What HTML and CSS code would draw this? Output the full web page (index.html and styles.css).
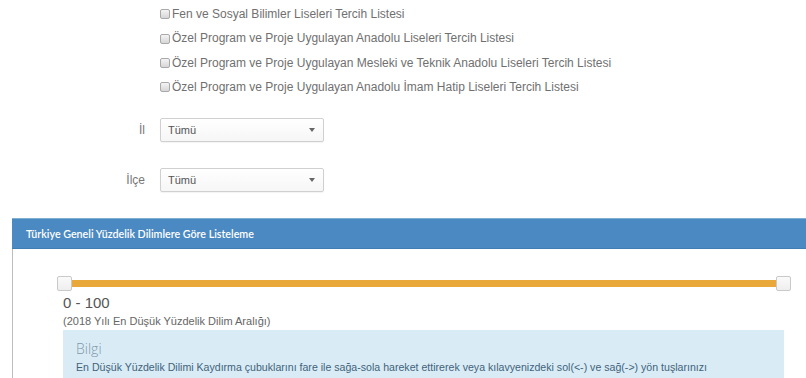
FILE: index.html
```html
<!DOCTYPE html>
<html lang="tr">
  <head>
    <meta charset="UTF-8" />
    <meta name="viewport" content="width=device-width, initial-scale=1.0" />
    <title>Tercih Listesi</title>
    <link rel="stylesheet" href="styles.css">
  </head>
  <body>
    <!-- liste seçimi -->
    <div class="filter-form">
      <ul class="check-list">
        <li><label><span class="checkbox"></span>Fen ve Sosyal Bilimler Liseleri Tercih Listesi</label></li>
        <li><label><span class="checkbox"></span>Özel Program ve Proje Uygulayan Anadolu Liseleri Tercih Listesi</label></li>
        <li><label><span class="checkbox"></span>Özel Program ve Proje Uygulayan Mesleki ve Teknik Anadolu Liseleri Tercih Listesi</label></li>
        <li><label><span class="checkbox"></span>Özel Program ve Proje Uygulayan Anadolu İmam Hatip Liseleri Tercih Listesi</label></li>
      </ul>

      <div class="form-row">
        <label class="form-label">İl</label>
        <div class="select-box">Tümü<span class="caret"></span></div>
      </div>
      <div class="form-row">
        <label class="form-label">İlçe</label>
        <div class="select-box">Tümü<span class="caret"></span></div>
      </div>
    </div>

    <!-- yüzdelik dilim paneli -->
    <div class="panel">
      <div class="panel-heading">Türkiye Geneli Yüzdelik Dilimlere Göre Listeleme</div>
      <div class="panel-body">
        <div class="range-slider">
          <div class="range-track"></div>
          <span class="range-handle handle-min"></span>
          <span class="range-handle handle-max"></span>
        </div>
        <div class="range-value">0 - 100</div>
        <div class="range-note">(2018 Yılı En Düşük Yüzdelik Dilim Aralığı)</div>

        <div class="alert-info">
          <h4>Bilgi</h4>
          <p>En Düşük Yüzdelik Dilimi Kaydırma çubuklarını fare ile sağa-sola hareket ettirerek veya kılavyenizdeki sol(&lt;-) ve sağ(-&gt;) yön tuşlarınızı kullanarak değiştirebilirsiniz.</p>
        </div>
      </div>
    </div>
  </body>
</html>
```

FILE: styles.css
```css
html,
body {
  margin: 0;
  background: #fff;
  overflow: hidden;
}

body {
  font-family: "Liberation Sans", Arial, sans-serif;
  color: #666;
}

.filter-form {
  padding-top: 2px;
}

/* checkbox listesi */
.check-list {
  list-style: none;
  margin: 0 0 18px 160px;
  padding: 0;
}

.check-list li {
  font-size: 12px;
  line-height: 24.4px;
  color: #707070;
}

.check-list label {
  display: flex;
  align-items: center;
}

.checkbox {
  width: 8px;
  height: 8px;
  margin-right: 2px;
  border: 1px solid #a9a9a9;
  border-radius: 2px;
  background: linear-gradient(#f4f4f4, #d6d6d6);
}

/* il / ilçe seçimi */
.form-row {
  display: flex;
  align-items: center;
  margin-bottom: 26px;
}

.form-label {
  width: 145px;
  margin-right: 15px;
  text-align: right;
  font-size: 12px;
  color: #777;
}

.select-box {
  position: relative;
  box-sizing: border-box;
  width: 164px;
  height: 24px;
  padding-left: 7px;
  border: 1px solid #d0d0d0;
  border-radius: 2px;
  background: linear-gradient(#fff, #f6f6f6);
  box-shadow: 0 1px 1px rgba(0, 0, 0, 0.05);
  font-size: 11px;
  line-height: 22px;
  color: #555;
}

.caret {
  position: absolute;
  right: 8px;
  top: 9px;
  border-left: 3px solid transparent;
  border-right: 3px solid transparent;
  border-top: 4px solid #666;
}

/* panel */
.panel {
  width: 821px;
  margin: 20px 0 0 12px;
  border: 1px solid #bdbdbd;
  border-top: none;
}

.panel-heading {
  height: 29px;
  margin: 0 -1px;
  padding-left: 14px;
  border-top: 1px solid #7fb0d2;
  border-bottom: 1px solid #3f7db2;
  background: #4a89c1;
  font-family: Lato, "Open Sans", sans-serif;
  font-size: 10.7px;
  font-weight: 600;
  line-height: 29px;
  color: #fff;
}

.panel-body {
  padding: 27px 50px 20px 50px;
}

.range-slider {
  position: relative;
  height: 15px;
  margin: 0 0 0 1px;
}

.range-track {
  position: absolute;
  left: 0;
  right: 0;
  top: 4px;
  height: 7px;
  background: #e9a93a;
}

.range-handle {
  position: absolute;
  top: 0;
  box-sizing: border-box;
  width: 15px;
  height: 15px;
  border: 1px solid #c9c9c9;
  border-radius: 2px;
  background: linear-gradient(#fafafa, #eeeeee);
}

.handle-min {
  left: -7px;
}

.handle-max {
  right: -7px;
}

.range-value {
  margin-top: 3px;
  font-size: 15px;
  line-height: 18px;
  color: #555;
}

.range-note {
  margin-top: 2px;
  font-size: 11px;
  line-height: 14px;
  color: #666;
}

/* bilgi kutusu */
.alert-info {
  margin: 2px 0 0 0;
  width: 721px;
  padding: 10px 40px 12px 13px;
  box-sizing: border-box;
  background: #d9ecf6;
}

.alert-info h4 {
  margin: 0;
  font-family: "Open Sans", sans-serif;
  font-size: 14px;
  font-weight: 300;
  line-height: 18px;
  color: #7f98a8;
}

.alert-info p {
  margin: 1px 0 0 0;
  font-size: 10.6px;
  line-height: 16px;
  color: #42627a;
}
```
